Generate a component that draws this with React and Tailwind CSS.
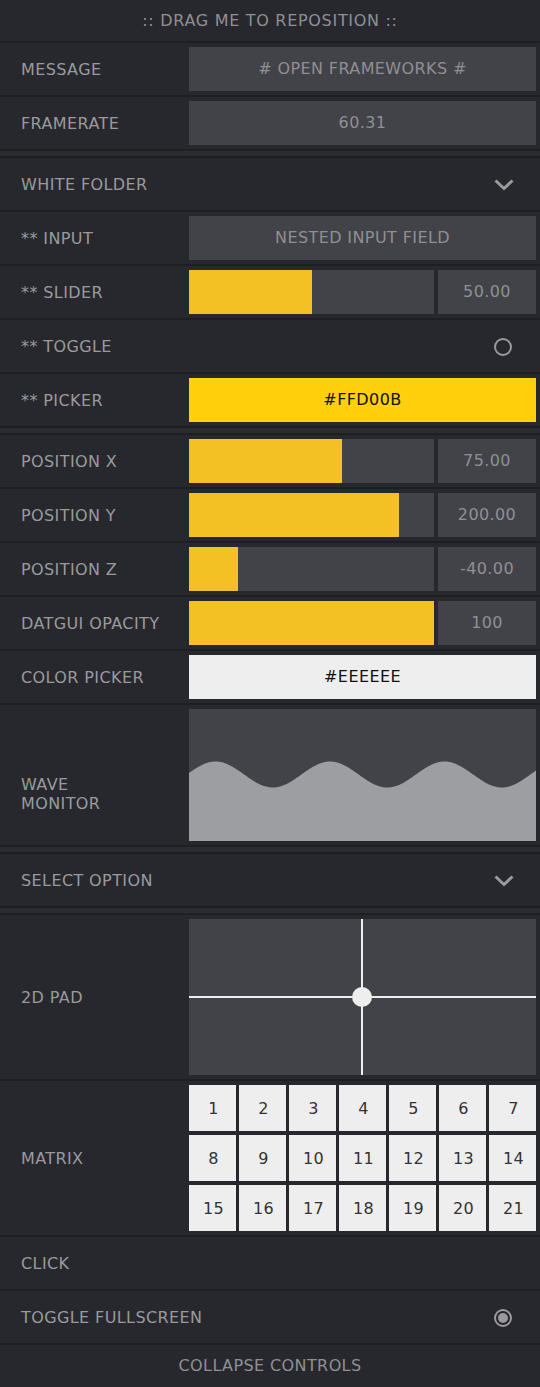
import React from "react";

function Row({ label, children, className = "h-[54px]", labelClass = "" }) {
  return (
    <div className={`flex items-center border-b-2 border-[#1e1f23] bg-[#27282d] ${className}`}>
      <div className={`w-[189px] shrink-0 pl-[21px] text-[#9a9a9d] leading-[19px] pt-[1px] ${labelClass}`}>{label}</div>
      <div className="flex-1 pr-[4px] self-stretch flex items-center">{children}</div>
    </div>
  );
}

function Gap() {
  return <div className="h-[7px] bg-[#2b2c31] border-b-2 border-[#1e1f23]" />;
}

function Box({ children, className = "bg-[#424249] text-[#8f9094]" }) {
  return (
    <div className={`w-full h-[44px] flex items-center justify-center ${className}`}>{children}</div>
  );
}

function Slider({ pct, value }) {
  return (
    <div className="w-full h-[44px] flex gap-[4px]">
      <div className="w-[245px] h-full bg-[#424249] flex">
        <div className="h-full bg-[#f4c124]" style={{ width: pct + "%" }} />
      </div>
      <div className="flex-1 h-full bg-[#424249] text-[#8f9094] flex items-center justify-center">{value}</div>
    </div>
  );
}

function Chevron() {
  return (
    <svg width="24" height="14" viewBox="0 0 24 14" className="mr-[24px] mt-[2px]">
      <polyline points="3.5,2.5 12,10.5 20.5,2.5" fill="none" stroke="#9a9a9d" strokeWidth="3" />
    </svg>
  );
}

function FolderRow({ label }) {
  return (
    <div className="flex items-center justify-between h-[54px] border-b-2 border-[#1e1f23] bg-[#27282d]">
      <div className="pl-[21px] pt-[1px] text-[#9a9a9d]">{label}</div>
      <Chevron />
    </div>
  );
}

function ToggleRow({ label, on }) {
  return (
    <div className="flex items-center justify-between h-[54px] border-b-2 border-[#1e1f23] bg-[#27282d]">
      <div className="pl-[21px] pt-[1px] text-[#9a9a9d]">{label}</div>
      <svg width="20" height="20" viewBox="0 0 20 20" className="mr-[27px] mt-[1px]">
        <circle cx="10" cy="10" r="8" fill="none" stroke="#9a9a9d" strokeWidth="2" />
        {on && <circle cx="10" cy="10" r="5" fill="#9a9a9d" />}
      </svg>
    </div>
  );
}

function Wave() {
  const W = 347;
  const H = 132;
  let d = `M0 ${H} `;
  for (let x = 0; x <= W; x += 1) {
    const y = 65.5 - 13 * Math.cos((2 * Math.PI * (x - 26.5)) / 114.5);
    d += `L${x} ${y.toFixed(2)} `;
  }
  d += `L${W} ${H} Z`;
  return (
    <svg width={W} height={H} viewBox={`0 0 ${W} ${H}`} className="block">
      <rect x="0" y="0" width={W} height={H} fill="#424249" />
      <path d={d} fill="#9d9ea2" />
    </svg>
  );
}

export default function App() {
  const nums = Array.from({ length: 21 }, (_, i) => i + 1);
  return (
    <div className="w-[540px] h-[1387px] bg-[#27282d] font-['DejaVu_Sans',Verdana,sans-serif] text-[16px] tracking-[0.4px] overflow-hidden">
      <div className="h-[43px] border-b-2 border-[#1e1f23] flex items-center justify-center text-[#8f9094] tracking-[0.7px]">
        :: DRAG ME TO REPOSITION ::
      </div>
      <Row label="MESSAGE">
        <Box># OPEN FRAMEWORKS #</Box>
      </Row>
      <Row label="FRAMERATE">
        <Box>60.31</Box>
      </Row>
      <Gap />
      <FolderRow label="WHITE FOLDER" />
      <Row label="** INPUT">
        <Box>NESTED INPUT FIELD</Box>
      </Row>
      <Row label="** SLIDER">
        <Slider pct={50} value="50.00" />
      </Row>
      <ToggleRow label="** TOGGLE" />
      <Row label="** PICKER">
        <Box className="bg-[#ffd00b] text-[#111111]">#FFD00B</Box>
      </Row>
      <Gap />
      <Row label="POSITION X">
        <Slider pct={62.5} value="75.00" />
      </Row>
      <Row label="POSITION Y">
        <Slider pct={85.7} value="200.00" />
      </Row>
      <Row label="POSITION Z">
        <Slider pct={20} value="-40.00" />
      </Row>
      <Row label="DATGUI OPACITY">
        <Slider pct={100} value="100" />
      </Row>
      <Row label="COLOR PICKER">
        <Box className="bg-[#eeeeee] text-[#111111]">#EEEEEE</Box>
      </Row>
      <Row label={<span>WAVE<br />MONITOR</span>} className="h-[142px]" labelClass="pt-[37px]">
        <Wave />
      </Row>
      <Gap />
      <FolderRow label="SELECT OPTION" />
      <Gap />
      <Row label="2D PAD" className="h-[166px]">
        <div className="relative w-full h-[156px] bg-[#424249]">
          <div className="absolute left-[172px] top-0 bottom-0 w-[2px] bg-[#eeeeee]" />
          <div className="absolute top-[77px] left-0 right-0 h-[2px] bg-[#eeeeee]" />
          <div className="absolute left-[163px] top-[68px] w-[20px] h-[20px] rounded-full bg-[#eeeeee]" />
        </div>
      </Row>
      <Row label="MATRIX" className="h-[156px]">
        <div className="w-full grid grid-cols-7 gap-x-[3px] gap-y-[4px]">
          {nums.map((n) => (
            <div key={n} className="h-[46px] bg-[#eeeeee] text-[#333333] flex items-center justify-center pl-[2px] pt-[1px]">
              {n}
            </div>
          ))}
        </div>
      </Row>
      <div className="h-[54px] border-b-2 border-[#1e1f23] flex items-center pl-[21px] pt-[1px] text-[#9a9a9d]">CLICK</div>
      <ToggleRow label="TOGGLE FULLSCREEN" on />
      <div className="h-[42px] flex items-center justify-center text-[#8f9094]">COLLAPSE CONTROLS</div>
    </div>
  );
}
